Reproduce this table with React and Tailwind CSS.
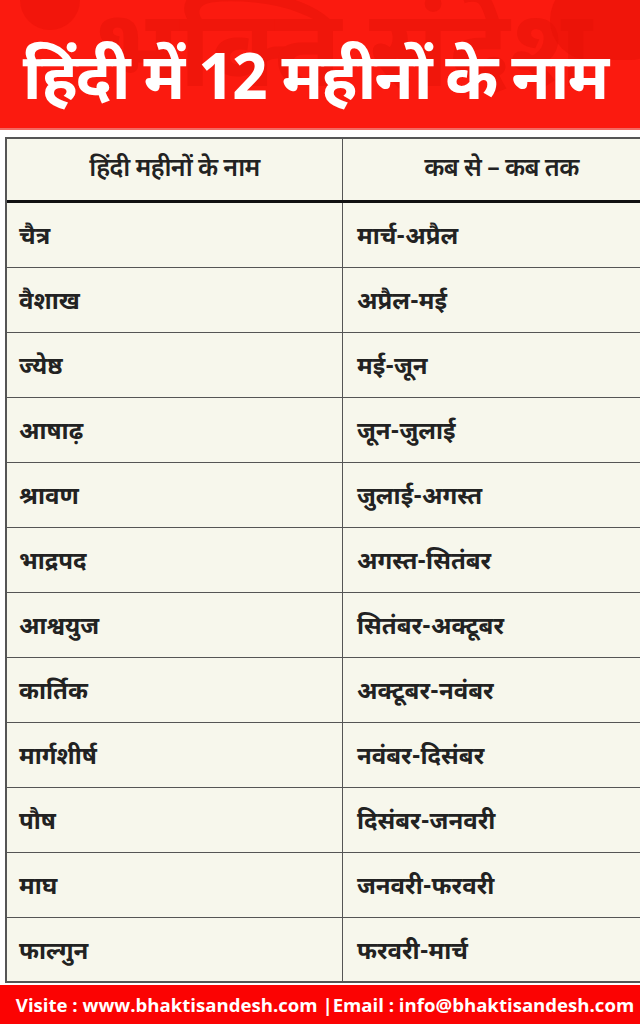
import React from 'react';

const months = [
  ['चैत्र', 'मार्च-अप्रैल'],
  ['वैशाख', 'अप्रैल-मई'],
  ['ज्येष्ठ', 'मई-जून'],
  ['आषाढ़', 'जून-जुलाई'],
  ['श्रावण', 'जुलाई-अगस्त'],
  ['भाद्रपद', 'अगस्त-सितंबर'],
  ['आश्वयुज', 'सितंबर-अक्टूबर'],
  ['कार्तिक', 'अक्टूबर-नवंबर'],
  ['मार्गशीर्ष', 'नवंबर-दिसंबर'],
  ['पौष', 'दिसंबर-जनवरी'],
  ['माघ', 'जनवरी-फरवरी'],
  ['फाल्गुन', 'फरवरी-मार्च'],
];

const font = { fontFamily: '"Noto Sans Devanagari", "Noto Sans", "Liberation Sans", sans-serif' };

const App = () => {
  return (
    <div className="w-[640px] h-[1024px] bg-white flex flex-col overflow-hidden" style={font}>
      <div className="relative h-[130px] bg-[#fb1a0f] border-b-2 border-[#f26a62] overflow-hidden flex items-center justify-center">
        <div className="absolute left-[95px] top-[6px] text-[108px] font-bold text-[#ee160b] opacity-80 whitespace-nowrap leading-none">
          भक्ति संदेश
        </div>
        <div className="absolute right-[-30px] top-[-20px] w-[120px] h-[80px] rounded-full bg-[#e51006] opacity-50" />
        <div className="absolute left-[20px] top-[-30px] w-[60px] h-[60px] rounded-full bg-[#e51006] opacity-40" />
        <h1 className="relative text-white text-[64px] font-bold leading-none tracking-[-0.03em] mt-[40px] mr-[10px] whitespace-nowrap">
          हिंदी में 12 महीनों के नाम
        </h1>
      </div>

      <div className="mt-[7px] ml-[5px] border-t-2 border-l-2 border-[#555] bg-[#f7f7ec] text-[#222]">
        <div className="flex h-[64px] border-b-[3px] border-[#111]">
          <div className="w-[336px] border-r border-[#555] flex items-center justify-center pt-[2px] text-[25px] font-semibold tracking-tight">
            हिंदी महीनों के नाम
          </div>
          <div className="flex-1 flex items-center justify-center pl-[20px] pt-[2px] text-[25px] font-semibold tracking-tight">
            कब से – कब तक
          </div>
        </div>
        {months.map(([name, range], i) => (
          <div
            key={name}
            className={`flex h-[65px] ${i === months.length - 1 ? 'border-b-2' : 'border-b'} border-[#555]`}
          >
            <div className="w-[336px] border-r border-[#555] flex items-center pl-[12px] pt-[6px] text-[24px] font-bold">
              {name}
            </div>
            <div className="flex-1 flex items-center pl-[14px] pt-[6px] text-[24px] font-bold">
              {range}
            </div>
          </div>
        ))}
      </div>

      <div className="mt-[2px] flex-1 bg-[#fb0303] flex items-center justify-center pl-[10px] text-white text-[18.6px] font-bold whitespace-nowrap" style={{ fontFamily: '"Open Sans", "Noto Sans", sans-serif' }}>
        Visite : www.bhaktisandesh.com |Email : info@bhaktisandesh.com
      </div>
    </div>
  );
};

export default App;
